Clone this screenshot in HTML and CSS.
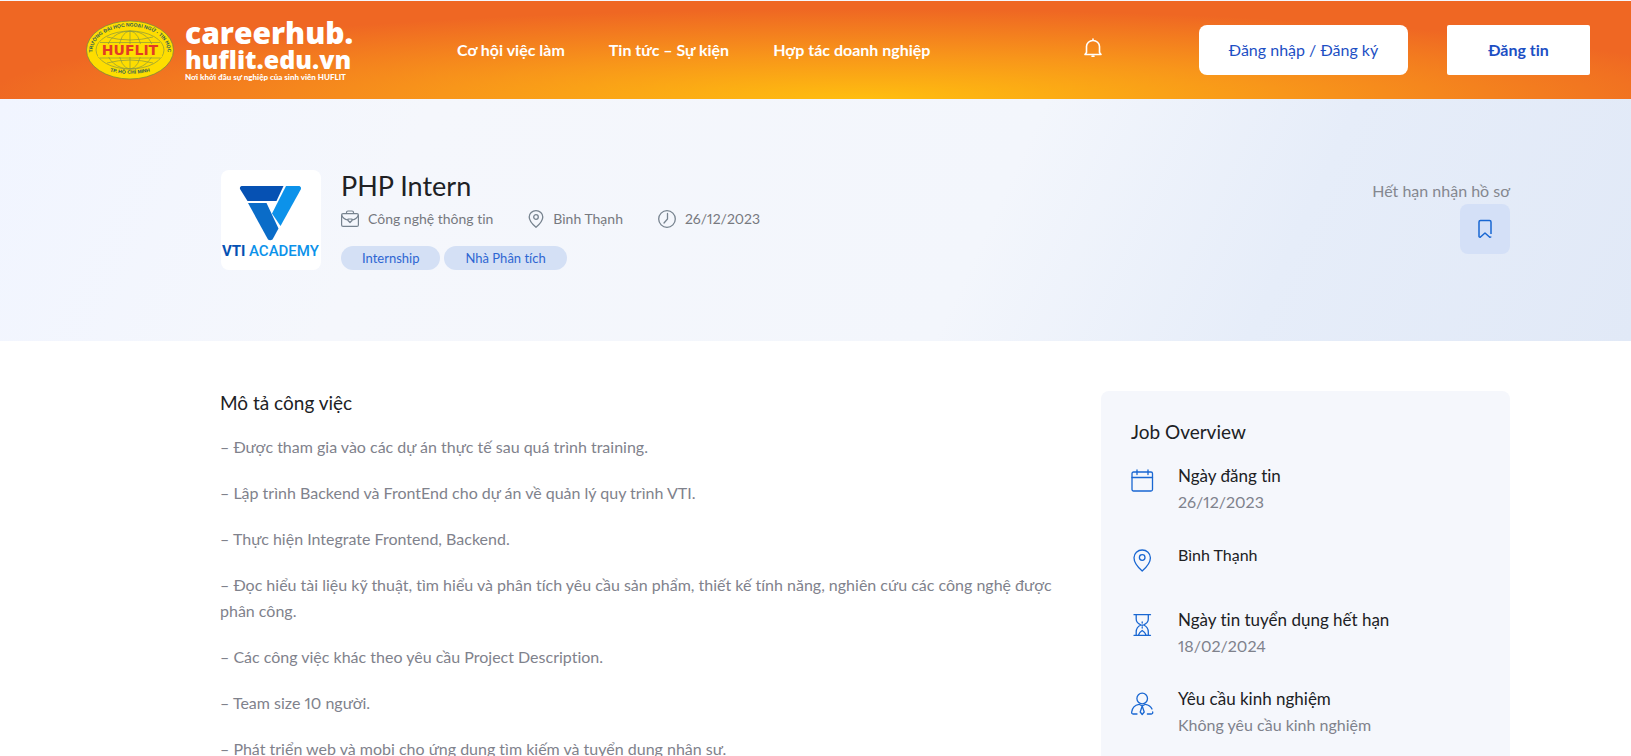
FILE: index.html
```html
<!DOCTYPE html>
<html lang="vi">
<head>
<meta charset="utf-8">
<meta name="viewport" content="width=device-width, initial-scale=1">
<title>PHP Intern – careerhub.huflit.edu.vn</title>
<link rel="stylesheet" href="styles.css">
</head>
<body>
<header class="site-header">
  <a class="brand" href="#">
    <svg class="brand-seal" viewBox="0 0 88 60" aria-hidden="true">
      <defs>
        <path id="arc-top" d="M6.500 31A37.500 24.500 0 0 1 81.500 31"/>
        <path id="arc-bottom" d="M14 48A40 17 0 0 0 74 48"/>
      </defs>
      <ellipse cx="44" cy="30" rx="43.500" ry="29" fill="#fedd00" stroke="#7d8c3a" stroke-width=".8"/>
      <g fill="none" stroke="#8a9640" stroke-width=".7">
        <ellipse cx="44" cy="30" rx="34" ry="19"/>
        <ellipse cx="44" cy="30" rx="23" ry="19"/>
        <ellipse cx="44" cy="30" rx="11" ry="19"/>
        <path d="M44 11v38M21 17q23 6 46 0M14 22.500h60M14 38h60M21 43q23-6 46 0"/>
      </g>
      <rect x="12" y="24" width="64" height="13" fill="#fedd00"/>
      <text x="44" y="35" class="seal-name">HUFLIT</text>
      <text class="seal-ring"><textPath href="#arc-top" startOffset="50%">TRƯỜNG ĐẠI HỌC NGOẠI NGỮ - TIN HỌC</textPath></text>
      <text class="seal-ring"><textPath href="#arc-bottom" startOffset="50%">TP. HỒ CHÍ MINH</textPath></text>
    </svg>
    <span class="brand-text">
      <span class="brand-line brand-line-a">careerhub.</span>
      <span class="brand-line brand-line-b">huflit.edu.vn</span>
      <span class="brand-tag">Nơi khởi đầu sự nghiệp của sinh viên HUFLIT</span>
    </span>
  </a>
  <nav class="main-nav">
    <a href="#">Cơ hội việc làm</a>
    <a href="#">Tin tức – Sự kiện</a>
    <a href="#">Hợp tác doanh nghiệp</a>
  </nav>
  <div class="header-actions">
    <button class="bell" type="button" aria-label="Thông báo">
      <svg viewBox="0 0 20 20" width="20" height="20" fill="none" stroke="#fff" stroke-width="1.600" stroke-linejoin="round" stroke-linecap="round"><path d="M10 1v1.500M2 16.500h16l-1.500-2V8.500a6.500 6 0 0 0-13 0v6zM9 18.300h2"/></svg>
    </button>
    <a class="btn btn-login" href="#">Đăng nhập / Đăng ký</a>
    <a class="btn btn-post" href="#">Đăng tin</a>
  </div>
</header>

<section class="hero">
  <div class="company-logo">
    <svg viewBox="0 0 100 100" role="img" aria-label="VTI Academy">
      <path d="M20.500 16H62.500L55.500 31H26.500L19 19Q18.500 16.500 20.500 16Z" fill="#0651b3"/>
      <path d="M65 16H78.500Q80.500 17 80 19L59.500 56 51 43.500Z" fill="#0c92ea"/>
      <path d="M27 33H45.500L57.500 58.500 51.500 69.500Q49 71 47 69.500Z" fill="#0a6cc8"/>
      <text x="1" y="86" class="vti-a">VTI</text>
      <text x="28" y="86" class="vti-b">ACADEMY</text>
    </svg>
  </div>
  <div class="hero-info">
    <h1>PHP Intern</h1>
    <ul class="meta">
      <li><svg viewBox="0 0 18 18" width="18" height="18" fill="none" stroke="#77838f" stroke-width="1.200" stroke-linejoin="round"><rect x=".6" y="3.600" width="16.800" height="12.800" rx="1.500"/><path d="M5.500 3.500V2.500Q5.500 1 7 1h4q1.500 0 1.500 1.500v1M.6 5Q2 9 6.800 10M17.400 5Q16 9 11.200 10M7 9h4v1.500l-2 2-2-2z"/></svg>Công nghệ thông tin</li>
      <li><svg viewBox="0 0 16 18" width="16" height="18" fill="none" stroke="#77838f" stroke-width="1.300" stroke-linejoin="round"><path d="M8 17.300Q1.200 11.500 1.200 7a6.800 6.300 0 0 1 13.600 0Q14.800 11.500 8 17.300z"/><circle cx="8" cy="7" r="2.300"/></svg>Bình Thạnh</li>
      <li><svg viewBox="0 0 18 18" width="18" height="18" fill="none" stroke="#77838f" stroke-width="1.300" stroke-linecap="round"><circle cx="9" cy="9" r="8.300"/><path d="M9.500 3.500V9L6 13"/></svg>26/12/2023</li>
    </ul>
    <div class="chips"><a href="#">Internship</a><a href="#">Nhà Phân tích</a></div>
  </div>
  <div class="hero-side">
    <span>Hết hạn nhận hồ sơ</span>
    <button class="save" type="button" aria-label="Lưu tin"><svg viewBox="0 0 16 20" width="16" height="20" fill="none" stroke="#1967d2" stroke-width="1.500" stroke-linejoin="round"><path d="M3.500 1.500h9q1.500 0 1.500 1.500v12M14 17.500q-.5 1-1.500.5L8 14l-4.500 4q-1 .5-1.500-.5V3q0-1.500 1.500-1.500"/></svg></button>
  </div>
</section>

<main class="content">
  <article class="description">
    <h2>Mô tả công việc</h2>
    <p>– Được tham gia vào các dự án thực tế sau quá trình training.</p>
    <p>– Lập trình Backend và FrontEnd cho dự án về quản lý quy trình VTI.</p>
    <p>– Thực hiện Integrate Frontend, Backend.</p>
    <p>– Đọc hiểu tài liệu kỹ thuật, tìm hiểu và phân tích yêu cầu sản phẩm, thiết kế tính năng, nghiên cứu các công nghệ được phân công.</p>
    <p>– Các công việc khác theo yêu cầu Project Description.</p>
    <p>– Team size 10 người.</p>
    <p>– Phát triển web và mobi cho ứng dụng tìm kiếm và tuyển dụng nhân sự.</p>
  </article>
  <aside class="overview">
    <h2>Job Overview</h2>
    <ul>
      <li><svg viewBox="0 0 24 24"><rect x="1" y="3" width="20.500" height="19" rx="1.500"/><path d="M1 8.500h20.500M6 1v4.500M17 1v4.500"/></svg><div><h3>Ngày đăng tin</h3><p>26/12/2023</p></div></li>
      <li><svg viewBox="0 0 24 24"><path d="M11.200 23Q3 16 3 9.800a8.200 7.800 0 0 1 16.400 0Q19.400 16 11.200 23z"/><circle cx="11.200" cy="9.500" r="2.800"/></svg><div><h3 class="place">Bình Thạnh</h3></div></li>
      <li><svg viewBox="0 0 24 24"><path d="M3 1.700h16.500M3 22.300h16.500M5.200 2v4q0 4 4.800 6-4.800 2-4.800 7v3M17.300 2v4q0 4-4.800 6 4.800 2 4.800 7v3M7.500 22q.5-2.500 3.700-4.500 3.300 2 3.800 4.500M11.200 9v1M11.200 12v1M11.200 14.500v.5"/></svg><div><h3>Ngày tin tuyển dụng hết hạn</h3><p>18/02/2024</p></div></li>
      <li><svg viewBox="0 0 24 24"><circle cx="11.200" cy="6.500" r="5.300"/><path d="M6 22H2q-1.500 0-1.300-2Q1.500 13.500 8 12.300L11.200 14l3.200-1.700q5 1 6.600 4.700M21.700 20q.2 2-1.300 2h-4M11.200 14l-2 6 2 2.500 2-2.500z"/></svg><div><h3>Yêu cầu kinh nghiệm</h3><p>Không yêu cầu kinh nghiệm</p></div></li>
    </ul>
  </aside>
</main>
</body>
</html>
```

FILE: styles.css
```css
* { box-sizing: border-box; }

body {
  margin: 0;
  height: 100vh;
  overflow: hidden;
  background: #fff;
  color: #202124;
  font-family: Lato, "Noto Sans", sans-serif;
  font-size: 16px;
  font-variant-ligatures: none;
  font-variant-numeric: proportional-nums;
  line-height: 26px;
}

a { color: inherit; text-decoration: none; }
h1, h2, h3, p, ul { margin: 0; padding: 0; font-weight: 400; }
ul { list-style: none; }
button { border: 0; padding: 0; font: inherit; background: none; }
svg { display: block; flex: none; }

/* Header */
.site-header {
  display: flex;
  align-items: center;
  height: 99px;
  padding: 0 41px 0 86px;
  border-top: 1px solid #f5f7fc;
  color: #fff;
  background: radial-gradient(ellipse 54% 92% at 53% 100%, #ffbe0f, #f8961a 48%, #ef6723);
}

.brand { display: flex; align-items: center; gap: 11px; }
.brand-seal { width: 88px; height: 60px; }
.seal-name { font: 700 14px "DejaVu Sans", sans-serif; fill: #e23b25; text-anchor: middle; }
.seal-ring { font: 700 5px "Liberation Sans", sans-serif; fill: #2c5a58; text-anchor: middle; }
.brand-text { display: flex; flex-direction: column; width: 170px; padding-top: 2px; white-space: nowrap; font-family: "Open Sans", sans-serif; }
.brand-line { font-weight: 800; }
.brand-line-a { font-size: 30px; line-height: 28px; }
.brand-line-b { font-size: 25px; line-height: 24px; }
.brand-tag { font-family: Lato, sans-serif; font-size: 8px; line-height: 12px; font-weight: 900; }

.main-nav { display: flex; gap: 44px; margin-left: 102px; font-weight: 700; white-space: nowrap; }

.header-actions { display: flex; align-items: center; margin-left: auto; white-space: nowrap; }
.bell { margin-right: 96px; padding-bottom: 4px; }
.btn { height: 50px; line-height: 50px; background: #fff; color: #1d4fc4; text-align: center; }
.btn-login { width: 209px; border-radius: 8px; }
.btn-post { width: 143px; margin-left: 39px; border-radius: 2px; font-weight: 700; }

/* Job banner */
.hero {
  display: flex;
  align-items: flex-start;
  padding: 71px 121px 71px 221px;
  background: linear-gradient(115deg, #f1f5ff 0%, #f5f7fc 25%, #f3f6fc 60%, #e6edf9 78%, #e1e9f7 100%);
}

.company-logo { width: 100px; height: 100px; overflow: hidden; border-radius: 8px; background: #fff; }
.vti-a { font: 700 15px Roboto, sans-serif; fill: #0651b3; }
.vti-b { font: 500 15px Roboto, sans-serif; fill: #0c92ea; }

.hero-info { margin-left: 20px; }
.hero-info h1 { font-size: 27px; line-height: 32px; }
.meta { display: flex; gap: 35px; margin-top: 4px; color: #77797f; font-size: 14px; }
.meta li { display: flex; align-items: center; gap: 9px; }
.chips { display: flex; gap: 4px; margin-top: 14px; }
.chips a { padding: 0 21px; border-radius: 12px; background: #d4e0f5; color: #2e66d2; font-size: 13px; line-height: 24px; }

.hero-side { display: flex; flex-direction: column; align-items: flex-end; margin-left: auto; padding-top: 8px; color: #84878f; }
.save { display: flex; align-items: center; justify-content: center; width: 50px; height: 50px; border-radius: 8px; background: #d4e0f7; }

/* Job details */
.content { display: flex; align-items: flex-start; justify-content: space-between; padding: 50px 121px 0 220px; }
.content h2 { font-size: 19px; }
.description { width: 850px; color: #7f828c; }
.description h2 { margin: -1px 0 18px; color: #202124; }
.description p { margin-bottom: 20px; }

.overview { width: 409px; padding: 28px 30px 60px; border-radius: 8px; background: #f5f7fc; }
.overview ul { margin-top: 18px; }
.overview li { display: flex; gap: 23px; min-height: 38px; margin-bottom: 27px; }
.overview svg { width: 24px; height: 24px; margin-top: 6px; fill: none; stroke: #1967d2; stroke-width: 1.300; stroke-linecap: round; stroke-linejoin: round; }
.overview h3 { font-size: 17px; }
.overview .place { font-size: 16px; }
.overview p { color: #7f828c; }
```
